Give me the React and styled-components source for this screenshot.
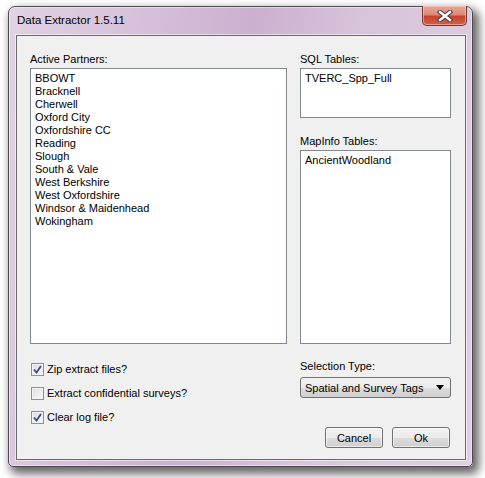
import React from "react";
import styled, { createGlobalStyle } from "styled-components";

const partners = [
  "BBOWT",
  "Bracknell",
  "Cherwell",
  "Oxford City",
  "Oxfordshire CC",
  "Reading",
  "Slough",
  "South & Vale",
  "West Berkshire",
  "West Oxfordshire",
  "Windsor & Maidenhead",
  "Wokingham",
];

const options = [
  { label: "Zip extract files?", checked: true },
  { label: "Extract confidential surveys?", checked: false },
  { label: "Clear log file?", checked: true },
];

export default function App() {
  return (
    <>
      <GlobalStyle />
      <Stage>
        <Window>
          <TitleBar>
            <Title>Data Extractor 1.5.11</Title>
            <CloseButton>
              <svg width="16" height="12" viewBox="0 0 16 12">
                <path
                  d="M3 2 L13 10 M13 2 L3 10"
                  stroke="#3b3f4c"
                  strokeWidth="4.4"
                  strokeLinecap="square"
                />
                <path
                  d="M3 2 L13 10 M13 2 L3 10"
                  stroke="#fff"
                  strokeWidth="2.4"
                  strokeLinecap="square"
                />
              </svg>
            </CloseButton>
          </TitleBar>
          <Client>
            <Column>
              <Label>Active Partners:</Label>
              <ListBox $height={276}>
                {partners.map((p) => (
                  <Item key={p}>{p}</Item>
                ))}
              </ListBox>
            </Column>
            <Column>
              <Label>SQL Tables:</Label>
              <ListBox $height={50}>
                <Item>TVERC_Spp_Full</Item>
              </ListBox>
              <Label $top={17}>MapInfo Tables:</Label>
              <ListBox $height={194}>
                <Item>AncientWoodland</Item>
              </ListBox>
            </Column>
            <Checks>
              {options.map((o) => (
                <CheckRow key={o.label}>
                  <CheckBox>
                    {o.checked && (
                      <svg width="9" height="9" viewBox="0 0 9 9">
                        <path
                          d="M1 4.5 L3.5 7.5 L8 1"
                          fill="none"
                          stroke="#3c4f86"
                          strokeWidth="1.9"
                        />
                      </svg>
                    )}
                  </CheckBox>
                  {o.label}
                </CheckRow>
              ))}
            </Checks>
            <Column>
              <Label $top={16}>Selection Type:</Label>
              <Combo>
                <span>Spatial and Survey Tags</span>
                <Arrow />
              </Combo>
              <Buttons>
                <Button>Cancel</Button>
                <Button>Ok</Button>
              </Buttons>
            </Column>
          </Client>
        </Window>
      </Stage>
    </>
  );
}

const GlobalStyle = createGlobalStyle`
  body {
    margin: 0;
    background: #ffffff;
    font-family: "Liberation Sans", Arial, sans-serif;
  }
`;

const Stage = styled.div`
  padding: 6px 0 0 8px;
  width: 485px;
  height: 478px;
  box-sizing: border-box;
  overflow: hidden;
`;

const Window = styled.div`
  width: 465px;
  height: 461px;
  box-sizing: border-box;
  display: flex;
  flex-direction: column;
  border: 1px solid #4f4a52;
  border-radius: 7px 7px 5px 5px;
  background: linear-gradient(
    100deg,
    #e1d2e4 0%,
    #d6c0d9 25%,
    #cbb0cf 45%,
    #d7c3da 65%,
    #dfd0e3 100%
  );
  box-shadow: inset 0 0 0 1px rgba(255, 255, 255, 0.45),
    4px 5px 10px 2px rgba(0, 0, 0, 0.6);
`;

const TitleBar = styled.div`
  height: 28px;
  display: flex;
  justify-content: space-between;
  align-items: flex-start;
  padding-left: 8px;
`;

const Title = styled.div`
  padding-top: 6px;
  font-size: 11.5px;
  line-height: 15px;
  color: #000;
`;

const CloseButton = styled.div`
  width: 45px;
  height: 20px;
  margin-top: -1px;
  margin-right: 5px;
  box-sizing: border-box;
  display: flex;
  align-items: center;
  justify-content: center;
  border: 1px solid #6e3a33;
  border-top: none;
  border-radius: 0 0 5px 5px;
  background: linear-gradient(
    #e9a796 0%,
    #de8a76 45%,
    #c8442c 55%,
    #d2604a 100%
  );
  box-shadow: inset 0 0 0 1px rgba(255, 220, 210, 0.5);
`;

const Client = styled.div`
  flex: 1;
  margin: 0 6px 6px 7px;
  box-sizing: border-box;
  border: 1px solid #6c6a70;
  box-shadow: 0 0 0 1px rgba(255, 255, 255, 0.55);
  background: #f0f0f0;
  display: grid;
  grid-template-columns: 257px 151px;
  grid-template-rows: auto 1fr;
  column-gap: 13px;
  padding: 17px 0 0 13px;
  font-size: 11px;
  color: #000;
`;

const Column = styled.div`
  display: flex;
  flex-direction: column;
`;

const Label = styled.div`
  line-height: 13px;
  margin-top: ${(p) => p.$top || 0}px;
  margin-bottom: 2px;
`;

const ListBox = styled.div`
  height: ${(p) => p.$height}px;
  box-sizing: border-box;
  background: #fff;
  border: 1px solid #828790;
  padding: 3px 4px 0;
`;

const Item = styled.div`
  line-height: 13px;
  white-space: nowrap;
`;

const Checks = styled.div`
  display: flex;
  flex-direction: column;
  gap: 11px;
  padding-top: 19px;
  padding-left: 1px;
`;

const CheckRow = styled.div`
  display: flex;
  align-items: center;
  gap: 3px;
  height: 13px;
  line-height: 13px;
`;

const CheckBox = styled.div`
  width: 13px;
  height: 13px;
  box-sizing: border-box;
  border: 1px solid #8f8f8f;
  background: linear-gradient(135deg, #dcdcdc, #fbfbfb);
  box-shadow: inset 0 0 0 1px #f4f4f4;
  display: flex;
  align-items: center;
  justify-content: center;
`;

const Combo = styled.div`
  height: 21px;
  margin-top: 2px;
  box-sizing: border-box;
  display: flex;
  align-items: center;
  justify-content: space-between;
  padding: 0 6px 0 4px;
  border: 1px solid #707070;
  border-radius: 3px;
  background: linear-gradient(#f2f2f2 0%, #ebebeb 50%, #dddddd 51%, #cfcfcf 100%);
`;

const Arrow = styled.div`
  width: 0;
  height: 0;
  border-left: 4px solid transparent;
  border-right: 4px solid transparent;
  border-top: 5px solid #000;
`;

const Buttons = styled.div`
  display: flex;
  justify-content: flex-end;
  gap: 9px;
  margin-top: 29px;
  padding-right: 1px;
`;

const Button = styled.div`
  width: 58px;
  height: 21px;
  box-sizing: border-box;
  display: flex;
  align-items: center;
  justify-content: center;
  border: 1px solid #707070;
  border-radius: 3px;
  background: linear-gradient(#f2f2f2 0%, #ebebeb 50%, #dddddd 51%, #cfcfcf 100%);
  box-shadow: inset 0 0 0 1px rgba(255, 255, 255, 0.6);
`;
